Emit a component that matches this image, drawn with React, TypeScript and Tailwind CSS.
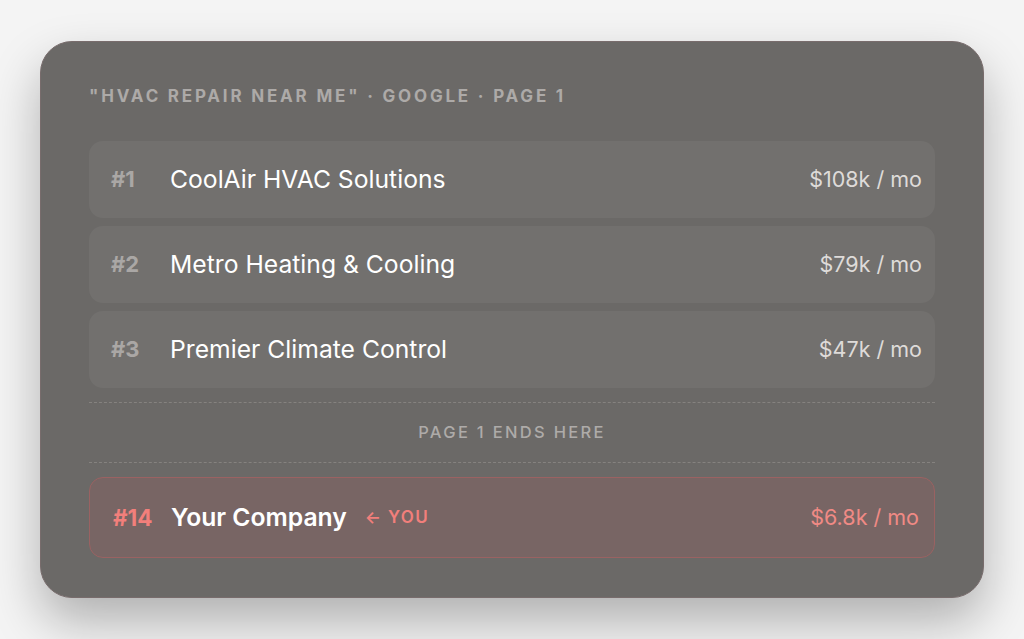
import React from 'react';

const rows = [
  { rank: '#1', name: 'CoolAir HVAC Solutions', value: '$108k / mo' },
  { rank: '#2', name: 'Metro Heating & Cooling', value: '$79k / mo' },
  { rank: '#3', name: 'Premier Climate Control', value: '$47k / mo' },
];

export default function App() {
  return (
    <div
      className="w-[1024px] h-[639px] bg-[#f4f4f4] pt-[41px] pl-[40px]"
      style={{ fontFamily: 'Inter, "Noto Sans", sans-serif' }}
    >
      <div className="w-[944px] h-[557px] rounded-[32px] bg-[#6b6967] border border-[#786c6c] shadow-[0_24px_50px_rgba(0,0,0,0.28)] px-[48px] pt-[44px]">
        <div className="text-[17px] font-bold tracking-[0.165em] text-[#adaaa8] leading-[20px] whitespace-nowrap">
          "HVAC REPAIR NEAR ME" · GOOGLE · PAGE 1
        </div>

        <div className="mt-[35px] flex flex-col gap-[8px]">
          {rows.map((r) => (
            <div
              key={r.rank}
              className="h-[77px] rounded-[14px] bg-[#72706e] flex items-center pl-[22px] pr-[13px]"
            >
              <span className="w-[59px] text-[22px] font-bold text-[#aaa7a5]">{r.rank}</span>
              <span className="flex-1 text-[24.7px] text-white">{r.name}</span>
              <span className="text-[21.5px] text-[#dedbd9]">{r.value}</span>
            </div>
          ))}
        </div>

        <div className="mt-[14px] border-t border-dashed border-[#85827f] h-[60px] flex items-center justify-center">
          <span className="text-[16.5px] font-medium tracking-[0.14em] text-[#aeaba9]">PAGE 1 ENDS HERE</span>
        </div>

        <div className="border-t border-dashed border-[#85827f] pt-[14px]">
          <div className="h-[81px] rounded-[14px] bg-[#786564] border border-[#9a6262] flex items-center pl-[23px] pr-[15px]">
            <span className="w-[58px] text-[22.5px] font-bold text-[#f27f7b]">#14</span>
            <span className="text-[24.7px] font-semibold text-white">Your Company</span>
            <span className="ml-[18px] text-[17px] font-semibold tracking-[0.08em] text-[#f27f7b] flex-1">← YOU</span>
            <span className="text-[21.5px] text-[#f08a85]">$6.8k / mo</span>
          </div>
        </div>
      </div>
    </div>
  );
}
